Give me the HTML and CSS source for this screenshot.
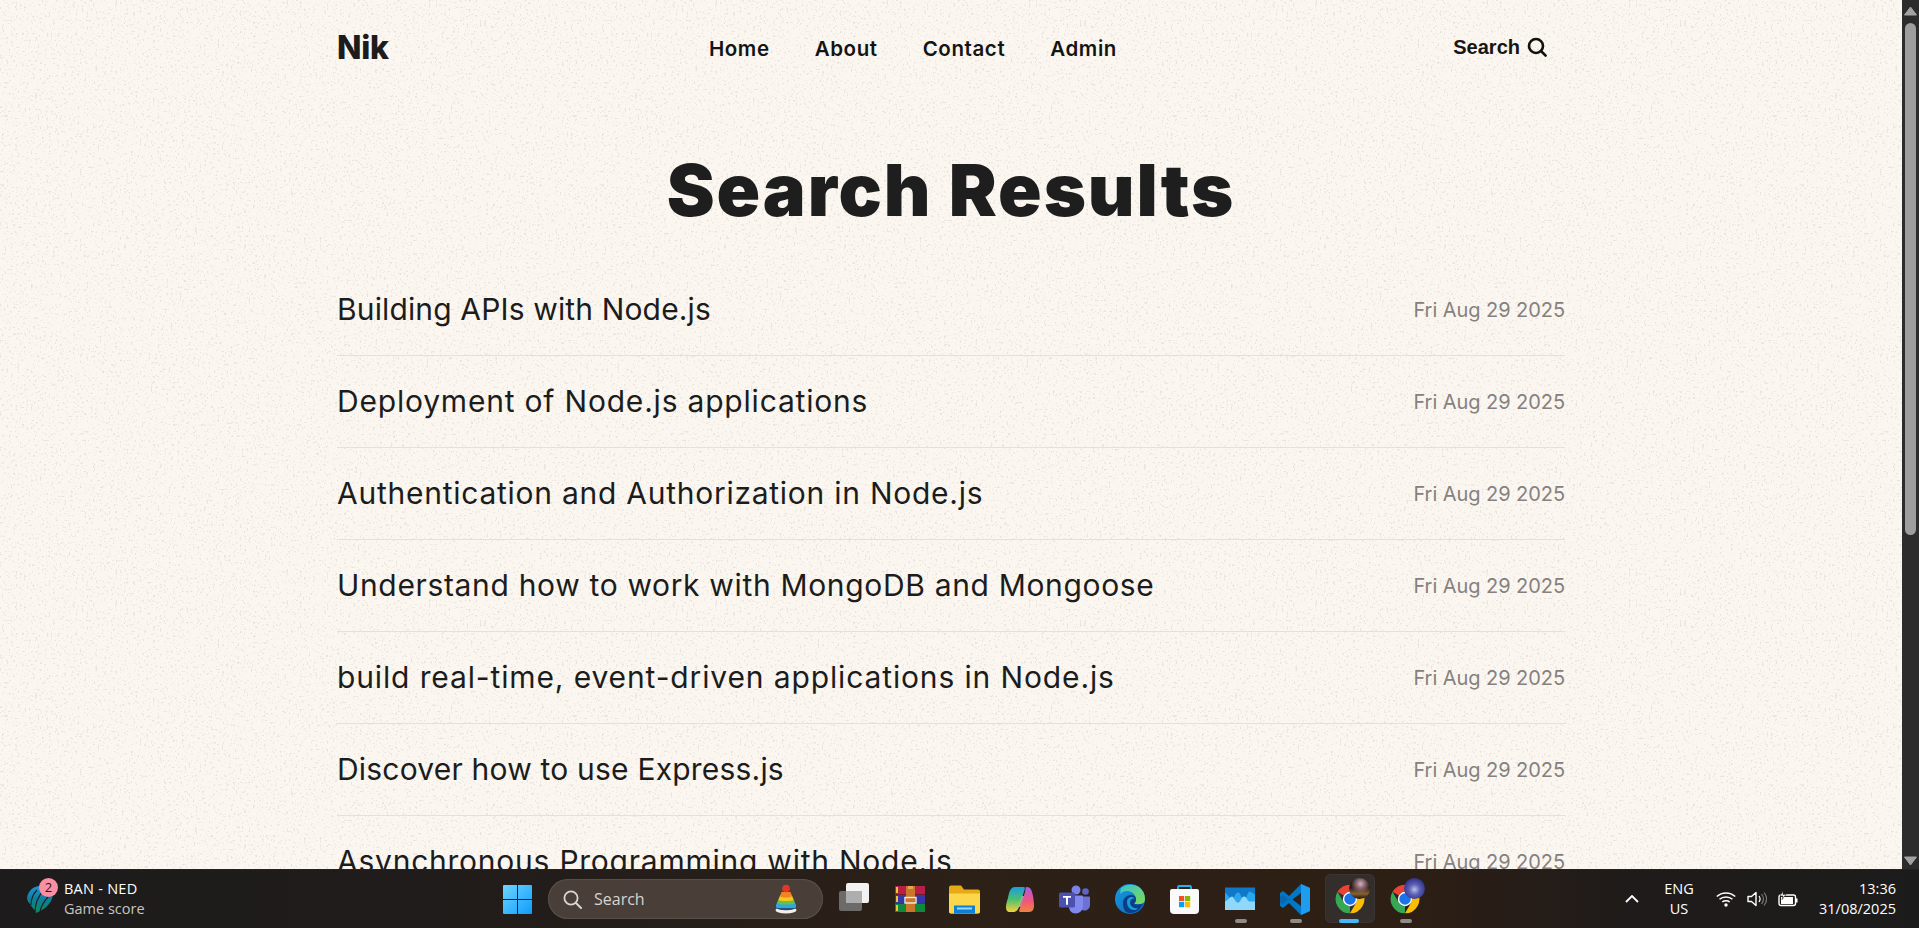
FILE: index.html
```html
<!DOCTYPE html>
<html lang="en">
<head>
<meta charset="utf-8">
<title>Search Results</title>
<link rel="stylesheet" href="styles.css">
</head>
<body>
<svg class="defs" width="0" height="0" aria-hidden="true">
  <defs>
    <symbol id="chrome" viewBox="0 0 48 48">
      <path fill="#ea4335" d="M24 1A23 23 0 0 1 43.9 12.500H24A11.500 11.500 0 0 0 14 18.250L4.100 12.500A23 23 0 0 1 24 1z"/>
      <path fill="#fbbc04" transform="rotate(120 24 24)" d="M24 1A23 23 0 0 1 43.9 12.500H24A11.500 11.500 0 0 0 14 18.250L4.100 12.500A23 23 0 0 1 24 1z"/>
      <path fill="#34a853" transform="rotate(240 24 24)" d="M24 1A23 23 0 0 1 43.9 12.500H24A11.500 11.500 0 0 0 14 18.250L4.100 12.500A23 23 0 0 1 24 1z"/>
      <circle cx="24" cy="24" r="11.500" fill="#fff"/>
      <circle cx="24" cy="24" r="9.200" fill="#1a73e8"/>
    </symbol>
  </defs>
</svg>
<div class="screen">
  <div class="window">
    <main class="page">
      <header class="site-head">
        <a class="logo">Nik</a>
        <nav class="nav">
          <a>Home</a><a>About</a><a>Contact</a><a>Admin</a>
        </nav>
        <button class="search-btn">Search
          <svg class="search-ico" viewBox="0 0 20 20"><circle cx="9" cy="9" r="7" fill="none" stroke="#111" stroke-width="2.600"/><path d="M14 14l4.600 4.600" stroke="#111" stroke-width="2.600" stroke-linecap="round"/></svg>
        </button>
      </header>
      <h1 class="title">Search Results</h1>
      <ul class="results">
        <li class="row"><a class="row-title">Building APIs with Node.js</a><span class="row-date">Fri Aug 29 2025</span></li>
        <li class="row"><a class="row-title">Deployment of Node.js applications</a><span class="row-date">Fri Aug 29 2025</span></li>
        <li class="row"><a class="row-title">Authentication and Authorization in Node.js</a><span class="row-date">Fri Aug 29 2025</span></li>
        <li class="row"><a class="row-title">Understand how to work with MongoDB and Mongoose</a><span class="row-date">Fri Aug 29 2025</span></li>
        <li class="row"><a class="row-title">build real-time, event-driven applications in Node.js</a><span class="row-date">Fri Aug 29 2025</span></li>
        <li class="row"><a class="row-title">Discover how to use Express.js</a><span class="row-date">Fri Aug 29 2025</span></li>
        <li class="row"><a class="row-title">Asynchronous Programming with Node.js</a><span class="row-date">Fri Aug 29 2025</span></li>
      </ul>
    </main>
    <div class="scrollbar">
      <svg class="sb-arrow" viewBox="0 0 13 10"><path d="M6.500 1L12.500 9H.5z" fill="#a3a3a3" stroke="#a3a3a3" stroke-linejoin="round"/></svg>
      <div class="sb-thumb"></div>
      <svg class="sb-arrow sb-down" viewBox="0 0 13 10"><path d="M.5 1H12.500L6.500 9z" fill="#a3a3a3" stroke="#a3a3a3" stroke-linejoin="round"/></svg>
    </div>
  </div>

  <footer class="taskbar">
    <div class="widget">
      <div class="widget-ico">
        <svg class="w26" viewBox="0 0 26 28">
          <defs><linearGradient id="ban" x1="0" y1="0" x2="0" y2="1"><stop offset="0" stop-color="#1a93d6"/><stop offset=".5" stop-color="#0f7d9c"/><stop offset="1" stop-color="#0b8a5c"/></linearGradient></defs>
          <path fill="url(#ban)" d="M0 13C1 6 6 1 13 1c6 0 12 3 13 7 0 6-3 11-8 15-3 2-6 4-9 5-1-1-1-2-1-3-1 0-2-2-3-3-1-1-1-2-2-3-1-1-3-3-3-6z"/>
          <path stroke="#1e1c1b" stroke-width="1.100" fill="none" d="M8 28C8 19 11 11 17 5M13 27c1-6 4-11 9-16M4 20C4 14 6 9 10 5"/>
        </svg>
        <span class="badge">2</span>
      </div>
      <div class="widget-text"><span class="widget-a">BAN - NED</span><span class="widget-b">Game score</span></div>
    </div>

    <div class="center">
      <div class="cell">
        <svg class="i29" viewBox="0 0 29 29">
          <defs><linearGradient id="win" x1="0" y1="0" x2="1" y2="1"><stop offset="0" stop-color="#6ed4ff"/><stop offset="1" stop-color="#0f9cfb"/></linearGradient></defs>
          <path fill="url(#win)" d="M1 0h13v14H0V1a1 1 0 0 1 1-1zM15 0h13a1 1 0 0 1 1 1v13H15zM0 15h14v14H1a1 1 0 0 1-1-1zM15 15h14v13a1 1 0 0 1-1 1H15z"/>
        </svg>
      </div>
      <div class="searchbox">
        <svg class="i19" viewBox="0 0 19 19"><circle cx="8" cy="8" r="6.600" fill="none" stroke="#d8d6d3" stroke-width="1.800"/><path d="M13 13l5 5" stroke="#d8d6d3" stroke-width="2" stroke-linecap="round"/></svg>
        <span class="searchbox-text">Search</span>
        <svg class="rings" viewBox="0 0 22 30">
          <ellipse cx="11" cy="26" rx="10.500" ry="3.600" fill="#f2efe6"/>
          <path fill="#27507f" d="M1 24c3 3 17 3 20 0l-1-1H2z"/>
          <path fill="#2fa7e0" d="M2 19h18c2 3 1 5-1 5H3c-2 0-3-2-1-5z"/>
          <path fill="#69c043" d="M3.500 15h15l1.500 4c0 2-18 2-18 0z"/>
          <path fill="#f4c91f" d="M5 11.500h12l1.500 4c0 2-15 2-15 0z"/>
          <path fill="#f58220" d="M6.500 8h9l1.500 4c0 2-12 2-12 0z"/>
          <circle cx="11" cy="4.500" r="3.800" fill="#e03a26"/>
        </svg>
      </div>
      <div class="apps">
        <div class="cell">
          <svg class="i32" viewBox="0 0 32 33"><rect x="0" y="8" width="23" height="20" rx="2" fill="#6c6b6a"/><rect x="7" y="0" width="23" height="20" rx="2" fill="#f2f2f2"/><path d="M7 8h16v12H9a2 2 0 0 1-2-2z" fill="#aeaeae"/></svg>
        </div>
        <div class="cell">
          <svg class="i30" viewBox="0 0 30 26">
            <rect y="0" width="30" height="8.500" fill="#b91d49"/><rect y="9" width="30" height="8" fill="#3537a8"/><rect y="17.500" width="30" height="8.500" fill="#0f8a3a"/>
            <rect x="1" y="1" width="2" height="6" fill="#e9c23e"/><rect x="1" y="10" width="2" height="6" fill="#e9c23e"/><rect x="1" y="19" width="2" height="6" fill="#e9c23e"/>
            <rect x="11" y="0" width="9" height="26" fill="#c9772a"/><path d="M13 0h5v3h-5z" fill="#e7a44c"/><rect x="10" y="11.500" width="11" height="5.500" fill="none" stroke="#eee" stroke-width="1.400"/>
          </svg>
        </div>
        <div class="cell">
          <svg class="i31" viewBox="0 0 31 28">
            <path fill="#e8a917" d="M2 0h10l3 4h14a2 2 0 0 1 2 2v20a2 2 0 0 1-2 2H2a2 2 0 0 1-2-2V2a2 2 0 0 1 2-2z"/>
            <path fill="#fcd749" d="M0 8h31v18a2 2 0 0 1-2 2H2a2 2 0 0 1-2-2z"/>
            <rect x="5" y="20" width="21" height="8" fill="#0f7fd4"/><rect x="8" y="22" width="15" height="2" fill="#9ad6ff"/>
          </svg>
        </div>
        <div class="cell">
          <svg class="i28" viewBox="0 0 28 25">
            <defs>
              <linearGradient id="cop1" x1="0" y1="0" x2="0" y2="1"><stop offset="0" stop-color="#1b9de2"/><stop offset=".5" stop-color="#4cc06e"/><stop offset="1" stop-color="#f6d13a"/></linearGradient>
              <linearGradient id="cop2" x1="0" y1="0" x2="0" y2="1"><stop offset="0" stop-color="#a85ce6"/><stop offset=".55" stop-color="#f0567e"/><stop offset="1" stop-color="#f2843c"/></linearGradient>
            </defs>
            <path fill="url(#cop1)" d="M9 0h9c1 0 1 2 .5 3L13 20c-1 3-3 5-6 5H4c-3 0-4-2-4-5 0-3 1-6 2-9C3 6 4 0 9 0z"/>
            <path fill="url(#cop2)" d="M20 0h1c4 0 5 4 6 9 .5 3 1 6 1 10 0 3-1.500 6-5 6h-9c-1 0-1-1-.5-2.500L19 5c.5-2 .5-5 1-5z"/>
            <path fill="#f6f0e8" opacity=".55" d="M16 9h2l-3.500 11h-2z"/>
          </svg>
        </div>
        <div class="cell">
          <svg class="i31" viewBox="0 0 31 28">
            <circle cx="17" cy="4.500" r="4.500" fill="#7b83eb"/><circle cx="26.500" cy="6" r="3.300" fill="#5d64c9"/>
            <path fill="#6a72d8" d="M21 11h9a1 1 0 0 1 1 1v7c0 4-3 6-5.500 6-1.500 0-3-.5-4.500-2z"/>
            <path fill="#8188ee" d="M10 10h13a1 1 0 0 1 1 1v9c0 5-3.500 8-7.500 8S10 25 10 21z"/>
            <rect x="0" y="7" width="16" height="15" rx="1.500" fill="#4a51ae"/>
            <path fill="#fff" d="M4 10.500h8v1.800H9v7H7v-7H4z"/>
          </svg>
        </div>
        <div class="cell">
          <svg class="i30" viewBox="0 0 30 30">
            <defs>
              <linearGradient id="edge1" x1="0" y1="0" x2="1" y2="1"><stop offset="0" stop-color="#1a9bdc"/><stop offset="1" stop-color="#0b63c2"/></linearGradient>
              <linearGradient id="edge2" x1="0" y1="0" x2="1" y2="1"><stop offset="0" stop-color="#37c4d4"/><stop offset="1" stop-color="#7edb4d"/></linearGradient>
            </defs>
            <circle cx="15" cy="15" r="15" fill="url(#edge1)"/>
            <path fill="url(#edge2)" d="M6 4c5-4 12-4.500 18-1 4 3 6 7 6 12 0 3-2 5-5 5h-6c1-1 2-3 2-5 0-4-4-8-9-8-3 0-5 1-7 3z" />
            <path fill="#0a3e86" d="M8 19c0-5 4-8 8-8 3 0 5 2 5 4 0 2-1 4-2 5 3 1 7 1 9-1-2 6-7 10-13 10-5 0-7-4-7-10z"/>
            <path fill="#1a9bdc" d="M12 18c0-3 2-5 5-5 1 0 2 .5 2.500 1.500-2-.5-4.500 1-4.500 4 0 3 3 6 8 6-1 1-3 1.500-4 1.500-4 0-7-3.500-7-8z"/>
          </svg>
        </div>
        <div class="cell">
          <svg class="i29" viewBox="0 0 29 29">
            <path d="M8 5V2a1 1 0 0 1 1-1h11a1 1 0 0 1 1 1v3" fill="none" stroke="#27b2ea" stroke-width="1.800"/>
            <path fill="#fafafa" d="M2 4h25a2 2 0 0 1 2 2v19a4 4 0 0 1-4 4H4a4 4 0 0 1-4-4V6a2 2 0 0 1 2-2z"/>
            <rect x="9" y="11" width="5.200" height="5.200" fill="#f25022"/><rect x="15" y="11" width="5.200" height="5.200" fill="#7fba00"/><rect x="9" y="17" width="5.200" height="5.200" fill="#00a4ef"/><rect x="15" y="17" width="5.200" height="5.200" fill="#ffb900"/>
          </svg>
        </div>
        <div class="cell">
          <svg class="i30" viewBox="0 0 30 23">
            <rect width="30" height="22.500" fill="#0f78c8"/>
            <path fill="#2aa6ea" d="M0 5c3 2 5 7 7 7s3-7 6-7 3 7 6 7 3-8 6-8l5 3V15H0z"/>
            <path fill="#8fd8fa" d="M0 14c3-1 5-5 7-5s3 6 6 6 3-6 6-6 3 5 6 5 3 0 5 0v8.500H0z"/>
          </svg>
        </div>
        <div class="cell">
          <svg class="i31" viewBox="0 0 31 31">
            <path fill="#0078c8" d="M22 0l9 4v23l-9 4-12-12-6 5-3-2v-13l3-2 6 5z"/>
            <path fill="#1e9cf0" d="M22 0l9 4v23l-9 4z"/>
            <path fill="#0a66ad" d="M4 11l5 4.500-5 4.500-3-1.800v-5.400z"/>
            <path fill="#2b211a" d="M22 9v13l-8.500-6.500z"/>
          </svg>
        </div>
        <div class="cell cell-active">
          <svg class="i30"><use href="#chrome"/></svg>
          <span class="avatar avatar-a"></span>
        </div>
        <div class="cell">
          <svg class="i30"><use href="#chrome"/></svg>
          <span class="avatar avatar-b"></span>
        </div>
        <span class="run-dot dot-monitor"></span>
        <span class="run-dot dot-code"></span>
        <span class="run-dot dot-chrome"></span>
        <span class="run-active"></span>
      </div>
    </div>

    <div class="tray">
      <svg class="chev" viewBox="0 0 14 8"><path d="M1 7l6-6 6 6" fill="none" stroke="#fff" stroke-width="1.800"/></svg>
      <div class="lang"><span>ENG</span><span>US</span></div>
      <div class="tray-icons">
        <svg class="i20" viewBox="0 0 20 16"><g fill="none" stroke="#fff" stroke-width="1.500"><path d="M.8 5.500c5-4.800 13.400-4.800 18.400 0"/><path d="M3.500 8.300c3.500-3.200 9.500-3.200 13 0"/><path d="M6.300 11c2-1.600 5.400-1.600 7.400 0"/></g><circle cx="10" cy="14" r="1.700" fill="#fff"/></svg>
        <svg class="i20" viewBox="0 0 20 16"><path d="M1 5.500h3.500L9 1.500v13L4.500 10.500H1z" fill="none" stroke="#fff" stroke-width="1.400" stroke-linejoin="round"/><path d="M12 5c1.300 1.800 1.300 4.200 0 6" fill="none" stroke="#fff" stroke-width="1.200"/><path d="M14.500 3c2.400 3 2.400 7 0 10M17 1.500c3.200 4 3.200 9 0 13" fill="none" stroke="#777" stroke-width="1.200"/></svg>
        <svg class="i20" viewBox="0 0 20 16"><rect x="1" y="4" width="16.500" height="10.500" rx="2" fill="none" stroke="#fff" stroke-width="1.400"/><rect x="18" y="7.500" width="1.500" height="4" fill="#fff"/><path d="M3 6h12v7H3z" fill="#fff"/><path d="M5 0L2 5h3l-1 3.500L8 3.500H5z" fill="#fff" stroke="#1c1b1b" stroke-width=".6"/></svg>
      </div>
      <div class="clock"><span>13:36</span><span>31/08/2025</span></div>
    </div>
  </footer>
</div>
</body>
</html>
```
FILE: styles.css
```css
* { box-sizing: border-box; }
html, body { margin: 0; height: 100%; overflow: hidden; }
body { font-family: "Inter", "Noto Sans", sans-serif; color: #1c1c1c; }
a { color: inherit; text-decoration: none; }
.defs { position: absolute; }

.screen { height: 928px; display: flex; flex-direction: column; }
.window { height: 869px; display: flex; }

.page {
  flex: 1;
  min-width: 0;
  overflow: hidden;
  padding: 0 337px 0 337px;
  background-color: #fbf7f0;
  background-image: url("data:image/svg+xml,%3Csvg xmlns='http://www.w3.org/2000/svg' width='600' height='600'%3E%3Cfilter id='n' x='0' y='0' width='100%25' height='100%25'%3E%3CfeTurbulence type='fractalNoise' baseFrequency='.45' numOctaves='3' seed='4' stitchTiles='stitch'/%3E%3CfeColorMatrix values='0 0 0 0 .45 0 0 0 0 .44 0 0 0 0 .4 0 0 0 9 -5.500'/%3E%3C/filter%3E%3Crect width='600' height='600' filter='url(%23n)' opacity='.26'/%3E%3C/svg%3E");
}

.site-head { height: 94px; display: flex; align-items: center; justify-content: space-between; }
.logo { font-size: 32px; font-weight: 800; letter-spacing: -.3px; }
.nav { display: flex; gap: 45px; padding-top: 2px; font-size: 20.500px; font-weight: 600; letter-spacing: .6px; color: #141414; }
.search-btn {
  display: flex; align-items: center; gap: 7px;
  padding: 0 18px 0 16px;
  background: none; border: 0;
  font-family: "Liberation Sans", sans-serif; font-size: 20px; font-weight: 700; color: #161616;
}
.search-ico { width: 20px; height: 20px; }

.title {
  margin: 44px 0 0;
  text-align: center;
  font-size: 72px; line-height: 104px; font-weight: 900; letter-spacing: 1.900px; color: #1e1e1e;
}

.results { list-style: none; margin: 22px 0 0; padding: 0; }
.row {
  height: 92px; display: flex; align-items: center; justify-content: space-between;
  border-bottom: 1px solid #e4e1dd;
}
.row-title { padding-bottom: 2px; font-size: 30px; font-weight: 400; color: #1c1c1c; }
.row:nth-child(1) .row-title { letter-spacing: .14px; }
.row:nth-child(2) .row-title { letter-spacing: .8px; }
.row:nth-child(3) .row-title { letter-spacing: .74px; }
.row:nth-child(4) .row-title { letter-spacing: .66px; }
.row:nth-child(5) .row-title { letter-spacing: .87px; }
.row:nth-child(6) .row-title { letter-spacing: .2px; }
.row:nth-child(7) .row-title { letter-spacing: .76px; }
.row-date { font-size: 20px; letter-spacing: -.06px; color: #85817f; }

.scrollbar { width: 17px; background: #2c2c2c; display: flex; flex-direction: column; align-items: center; }
.sb-arrow { width: 13px; height: 10px; margin-top: 6px; flex: none; }
.sb-thumb { width: 11px; height: 512px; margin-top: 7px; border-radius: 6px; background: #9e9e9e; }
.sb-down { margin-top: auto; margin-bottom: 3px; }

.taskbar {
  height: 59px; display: flex; align-items: center;
  padding: 0 23px 0 27px;
  border-top: 1px solid #242221;
  color: #fff;
  font-family: "Open Sans", "Noto Sans", sans-serif;
  background: linear-gradient(90deg, #1d1b1b 0%, #201c1b 22%, #2c2017 50%, #2e1f14 72%, #1f1b1a 85%, #1c1b1b 100%);
}

.widget { width: 463px; display: flex; align-items: center; gap: 11px; }
.widget-ico { position: relative; width: 26px; height: 28px; }
.w26 { width: 26px; height: 28px; display: block; }
.badge {
  position: absolute; top: -7px; left: 12px;
  width: 19px; height: 19px; border-radius: 50%;
  background: #fa8fa3; color: #1b1b1b;
  font-size: 13px; line-height: 19px; text-align: center;
}
.widget-text { display: flex; flex-direction: column; font-size: 14.500px; line-height: 20px; }
.widget-a { letter-spacing: .25px; }
.widget-b { color: #c7c5c3; }

.center { display: flex; align-items: center; gap: 3px; }
.apps { position: relative; display: flex; margin-left: 1px; }
.cell {
  position: relative; width: 55px; height: 50px;
  display: flex; align-items: center; justify-content: center;
}
.cell-active::before {
  content: ""; position: absolute; top: 0; left: 2.500px; right: 2.500px; bottom: 1px;
  background: #332e2b; border-radius: 6px; box-shadow: inset 0 0 0 1px #3a3532;
}
.cell-active svg { position: relative; }
.i19 { width: 19px; height: 19px; flex: none; }
.i20 { width: 20px; height: 16px; }
.i28 { width: 28px; height: 25px; }
.i29 { width: 29px; height: 29px; }
.i30 { width: 30px; height: 30px; }
.i31 { width: 31px; height: 31px; }
.i32 { width: 32px; height: 33px; }

.searchbox {
  width: 275px; height: 40px; border-radius: 20px;
  display: flex; align-items: center;
  padding: 0 26px 0 15px;
  background: #4a3f38;
  box-shadow: inset 0 0 0 1px #57504a;
}
.searchbox-text { margin-left: 12px; font-size: 16px; color: #d6d3cf; }
.rings { width: 22px; height: 30px; margin-left: auto; }

.avatar { position: absolute; width: 21px; height: 21px; border-radius: 50%; top: 4px; left: 27px; }
.avatar-a { background: radial-gradient(circle at 55% 28%, #d6b2c0 0%, #8d6a72 22%, transparent 52%), linear-gradient(180deg, #1a1210 0%, #2a1a14 45%, #8a6230 75%, #1a120d 100%); }
.avatar-b { background: radial-gradient(circle at 50% 55%, #b7c0e6 0%, #5a5fb5 35%, #34368e 70%, #222470 100%); }

.run-dot, .run-active { position: absolute; height: 4px; border-radius: 2px; bottom: 1px; }
.run-dot { width: 12px; background: #8e8b88; }
.dot-monitor { left: 408px; }
.dot-code { left: 463px; }
.dot-chrome { left: 573px; }
.run-active { left: 512px; width: 20px; background: #47b8f3; }

.tray { margin-left: auto; display: flex; align-items: center; }
.chev { width: 14px; height: 8px; margin-right: 25px; }
.lang { width: 30px; display: flex; flex-direction: column; align-items: center; font-size: 14.500px; line-height: 20px; }
.tray-icons { display: flex; gap: 11px; margin-left: 22px; }
.clock { margin-left: 21px; display: flex; flex-direction: column; align-items: flex-end; font-size: 14.500px; line-height: 20px; }
```
